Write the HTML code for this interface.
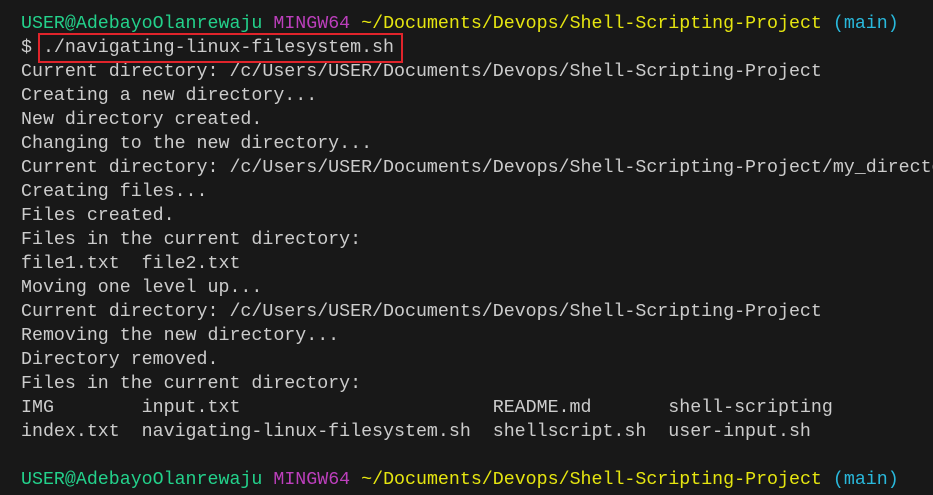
<!DOCTYPE html>
<html><head><style>
html,body{margin:0;padding:0;background:#181818;width:933px;height:495px;overflow:hidden}
pre{margin:0;position:absolute;left:21px;top:12px;font-family:"Liberation Mono",monospace;font-size:18.3px;line-height:24px;color:#cccccc;white-space:pre}
.g{color:#23d18b}.m{color:#bc3fbc}.y{color:#e5e510}.c{color:#29b8db}
.box{position:absolute;left:38px;top:33px;width:361px;height:26px;border:2px solid #e0242b}
</style></head><body>
<pre><span class="g">USER@AdebayoOlanrewaju</span> <span class="m">MINGW64</span> <span class="y">~/Documents/Devops/Shell-Scripting-Project</span> <span class="c">(main)</span>
$ ./navigating-linux-filesystem.sh
Current directory: /c/Users/USER/Documents/Devops/Shell-Scripting-Project
Creating a new directory...
New directory created.
Changing to the new directory...
Current directory: /c/Users/USER/Documents/Devops/Shell-Scripting-Project/my_directory
Creating files...
Files created.
Files in the current directory:
file1.txt  file2.txt
Moving one level up...
Current directory: /c/Users/USER/Documents/Devops/Shell-Scripting-Project
Removing the new directory...
Directory removed.
Files in the current directory:
IMG        input.txt                       README.md       shell-scripting
index.txt  navigating-linux-filesystem.sh  shellscript.sh  user-input.sh

<span class="g">USER@AdebayoOlanrewaju</span> <span class="m">MINGW64</span> <span class="y">~/Documents/Devops/Shell-Scripting-Project</span> <span class="c">(main)</span></pre>
<div class="box"></div>
</body></html>
